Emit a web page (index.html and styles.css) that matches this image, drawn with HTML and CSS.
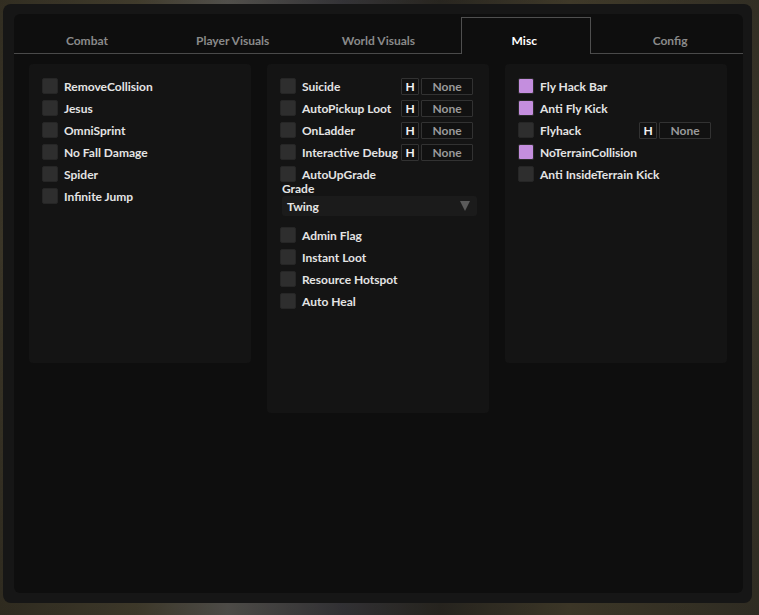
FILE: index.html
```html
<!DOCTYPE html>
<html lang="en">
<head>
    <meta charset="UTF-8">
    <title>Menu</title>
    <link rel="stylesheet" href="styles.css">
</head>
<body>
    <div class="window">
        <div class="inner">
            <div class="tabs">
                <div class="tab">Combat</div>
                <div class="tab">Player Visuals</div>
                <div class="tab">World Visuals</div>
                <div class="tab active"><span>Misc</span></div>
                <div class="tab">Config</div>
            </div>

            <div class="content">
                <div class="panel">
                    <div class="row"><span class="check"></span><span class="name">RemoveCollision</span></div>
                    <div class="row"><span class="check"></span><span class="name">Jesus</span></div>
                    <div class="row"><span class="check"></span><span class="name">OmniSprint</span></div>
                    <div class="row"><span class="check"></span><span class="name">No Fall Damage</span></div>
                    <div class="row"><span class="check"></span><span class="name">Spider</span></div>
                    <div class="row"><span class="check"></span><span class="name">Infinite Jump</span></div>
                </div>

                <div class="panel tall">
                    <div class="row"><span class="check"></span><span class="name">Suicide</span><span class="key">H</span><span class="bind">None</span></div>
                    <div class="row"><span class="check"></span><span class="name">AutoPickup Loot</span><span class="key">H</span><span class="bind">None</span></div>
                    <div class="row"><span class="check"></span><span class="name">OnLadder</span><span class="key">H</span><span class="bind">None</span></div>
                    <div class="row"><span class="check"></span><span class="name">Interactive Debug</span><span class="key">H</span><span class="bind">None</span></div>
                    <div class="row"><span class="check"></span><span class="name">AutoUpGrade</span></div>
                    <div class="grade">
                        <div class="field-label">Grade</div>
                        <div class="select"><span>Twing</span><span class="arrow"></span></div>
                    </div>
                    <div class="row"><span class="check"></span><span class="name">Admin Flag</span></div>
                    <div class="row"><span class="check"></span><span class="name">Instant Loot</span></div>
                    <div class="row"><span class="check"></span><span class="name">Resource Hotspot</span></div>
                    <div class="row"><span class="check"></span><span class="name">Auto Heal</span></div>
                </div>

                <div class="panel">
                    <div class="row"><span class="check on"></span><span class="name">Fly Hack Bar</span></div>
                    <div class="row"><span class="check on"></span><span class="name">Anti Fly Kick</span></div>
                    <div class="row"><span class="check"></span><span class="name">Flyhack</span><span class="key">H</span><span class="bind">None</span></div>
                    <div class="row"><span class="check on"></span><span class="name">NoTerrainCollision</span></div>
                    <div class="row"><span class="check"></span><span class="name">Anti InsideTerrain Kick</span></div>
                </div>
            </div>
        </div>
    </div>
</body>
</html>
```

FILE: styles.css
```css
* {
    margin: 0;
    padding: 0;
    box-sizing: border-box;
    font-family: 'Lato', 'Open Sans', Arial, sans-serif;
}

body {
    width: 759px;
    height: 615px;
    overflow: hidden;
    padding: 4px 7px 12px 3px;
    background:
        linear-gradient(180deg, rgba(0, 0, 0, 0.15), rgba(0, 0, 0, 0) 40%, rgba(0, 0, 0, 0.2)),
        linear-gradient(90deg, #3a3527 0%, #4b4533 18%, #5f5d58 30%, #3d3c40 45%, #2f2c25 58%, #4a4330 75%, #3a362a 100%);
}

/* outer frame */
.window {
    height: 100%;
    background: #161616;
    border-radius: 8px;
    padding: 10px 9px 10px 11px;
}

.inner {
    height: 100%;
    background: #0e0e0e;
    border-radius: 6px;
}

/* tab strip */
.tabs {
    display: flex;
    padding-top: 3px;
    border-bottom: 1px solid #4a4a4a;
}

.tab {
    flex: 1;
    position: relative;
    height: 36px;
    padding-top: 18px;
    line-height: 12px;
    font-size: 12px;
    font-weight: 700;
    color: #8a8a8a;
    text-align: center;
}

.tab.active {
    color: #fff;
}

/* selected tab frame, sits over the strip's bottom line */
.tab.active::before {
    content: "";
    position: absolute;
    top: 0;
    left: 10px;
    right: 6px;
    bottom: -1px;
    background: #0e0e0e;
    border: 1px solid #4f4f4f;
    border-bottom: none;
}

.tab.active span {
    position: relative;
}

/* option panels */
.content {
    display: flex;
    align-items: flex-start;
    gap: 16px;
    padding: 10px 16px 0 15px;
}

.panel {
    width: 222px;
    height: 299px;
    background: #141414;
    border-radius: 4px;
    padding: 14px 13px;
    display: flex;
    flex-direction: column;
    gap: 6px;
}

.panel.tall {
    height: 349px;
}

.row {
    display: flex;
    align-items: center;
    height: 16px;
}

.check {
    width: 16px;
    height: 16px;
    flex: none;
    background: #2e2e2e;
    border: 1px solid #262626;
    border-radius: 2px;
    margin-right: 6px;
}

.check.on {
    background: #c48ede;
    border-color: #2a2a2a;
}

.name {
    width: 99px;
    flex: none;
    white-space: nowrap;
    font-size: 12px;
    font-weight: 700;
    color: #e4e4e4;
}

.key,
.bind {
    height: 17px;
    line-height: 15px;
    background: #111;
    border: 1px solid #323232;
    border-radius: 1px;
    font-size: 12px;
    font-weight: 700;
    text-align: center;
}

.key {
    width: 18px;
    color: #f2f2f2;
}

.bind {
    width: 52px;
    margin-left: 2px;
    color: #9a9a9a;
}

/* grade dropdown */
.grade {
    margin: -6px 0 5px 2px;
}

.field-label {
    height: 14px;
    line-height: 14px;
    font-size: 12px;
    font-weight: 700;
    color: #e4e4e4;
}

.select {
    width: 195px;
    height: 20px;
    background: #1b1b1b;
    border-radius: 3px;
    display: flex;
    align-items: center;
    justify-content: space-between;
    padding: 0 7px 0 5px;
    font-size: 12px;
    font-weight: 700;
    color: #e4e4e4;
}

.arrow {
    width: 0;
    height: 0;
    border-left: 5px solid transparent;
    border-right: 5px solid transparent;
    border-top: 10px solid #5a5a5a;
}
```
